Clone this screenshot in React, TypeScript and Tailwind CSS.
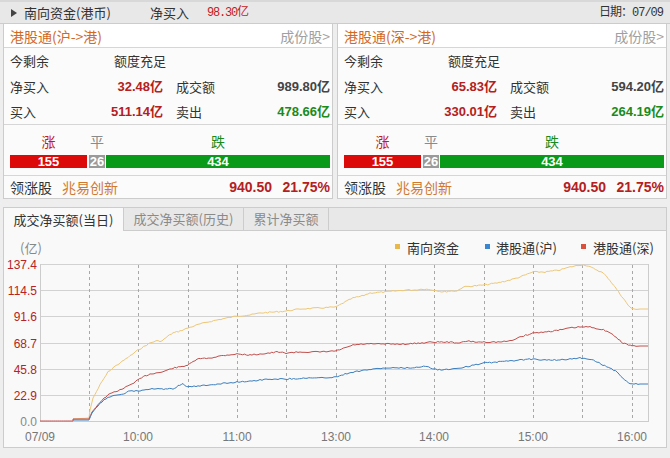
import React from "react";

type P = [number, number];

const yellowPts: P[] = [
  [73, 419], [89, 418], [90, 410], [93, 398], [100, 385], [108, 372], [114, 367], [120, 363], [130, 356], [138, 350], [145, 346], [150, 343], [156, 341], [162, 341], [168, 336], [173, 333], [180, 331], [188, 328], [194, 326], [200, 324], [208, 322], [217, 320], [227, 318], [237, 316], [250, 315], [260, 313], [275, 312], [286, 311], [300, 309], [320, 308], [336, 307], [345, 302], [353, 298], [362, 296], [370, 293], [385, 292], [395, 291], [407, 290], [415, 290], [423, 289], [434, 290], [443, 292], [450, 291], [457, 291], [463, 287], [473, 286], [484, 285], [497, 283], [510, 280], [520, 277], [533, 272], [545, 272], [560, 270], [570, 267], [580, 265], [585, 265], [590, 267], [597, 270], [603, 273], [608, 278], [615, 287], [620, 294], [623, 298], [628, 305], [632, 309], [648, 309],
];
const redPts: P[] = [
  [40, 421], [73, 421], [73, 419], [89, 419], [92, 412], [100, 402], [108, 395], [114, 392], [120, 390], [130, 385], [138, 380], [145, 376], [150, 374], [162, 372], [168, 370], [173, 368], [180, 367], [188, 365], [193, 362], [197, 359], [210, 358], [220, 356], [227, 355], [237, 354], [250, 355], [260, 354], [270, 353], [277, 352], [286, 353], [300, 352], [320, 352], [336, 351], [345, 348], [353, 345], [365, 344], [385, 344], [407, 344], [420, 343], [434, 342], [447, 342], [460, 343], [467, 341], [475, 342], [484, 342], [500, 342], [510, 341], [520, 337], [533, 333], [545, 332], [560, 330], [570, 328], [580, 327], [590, 327], [600, 329], [607, 331], [613, 335], [618, 339], [623, 343], [632, 346], [648, 346],
];
const bluePts: P[] = [
  [73, 420], [89, 420], [92, 413], [100, 403], [108, 397], [114, 396], [120, 395], [125, 393], [130, 391], [138, 391], [150, 389], [160, 389], [173, 389], [178, 386], [183, 384], [188, 387], [200, 386], [210, 385], [217, 384], [227, 383], [237, 382], [250, 381], [260, 380], [270, 379], [286, 379], [307, 378], [320, 378], [336, 377], [345, 374], [353, 372], [365, 370], [375, 369], [385, 368], [407, 368], [420, 367], [427, 366], [434, 369], [443, 370], [450, 369], [460, 368], [470, 366], [484, 363], [497, 362], [510, 361], [520, 360], [533, 359], [545, 360], [560, 360], [570, 359], [580, 358], [590, 359], [597, 362], [603, 365], [610, 368], [617, 372], [623, 378], [630, 384], [648, 384],
];

function densify(pts: P[], seed: number): string {
  let s = seed;
  const rnd = () => {
    s = (s * 9301 + 49297) % 233280;
    return s / 233280;
  };
  const out: string[] = [];
  for (let i = 0; i < pts.length - 1; i++) {
    const [x0, y0] = pts[i];
    const [x1, y1] = pts[i + 1];
    const n = Math.max(1, Math.round((x1 - x0) / 2));
    for (let k = 0; k < n; k++) {
      const t = k / n;
      const x = x0 + (x1 - x0) * t;
      let y = y0 + (y1 - y0) * t;
      if (x > 95 && x < 640) y += (rnd() - 0.5) * 1.2;
      out.push(`${x.toFixed(1)},${y.toFixed(1)}`);
    }
  }
  const last = pts[pts.length - 1];
  out.push(`${last[0]},${last[1]}`);
  return out.join(" ");
}

function Panel({
  title,
  net,
  turnover,
  buy,
  sell,
}: {
  title: string;
  net: string;
  turnover: string;
  buy: string;
  sell: string;
}) {
  const num = "font-['Liberation_Sans','Noto_Sans_CJK_SC',sans-serif] font-bold text-[13px]";
  return (
    <div className="w-[330px] border-l border-r border-b border-[#cccccc] bg-[#fbfbfb]">
      <div className="h-[24px] flex items-center justify-between pl-[6px] pr-[2px] border-b border-[#d6d6d6] bg-white">
        <span className="text-[14px] leading-[24px] text-[#d2691e]">{title}</span>
        <span className="text-[14px] leading-[24px] text-[#a0a0a0]">成份股&gt;</span>
      </div>
      <div className="border-b border-[#d6d6d6] pl-[6px] pr-[2px] text-[13px] text-[#333333]">
        <div className="h-[26px] flex items-center">
          <span className="w-[104px]">今剩余</span>
          <span>额度充足</span>
        </div>
        <div className="h-[25px] flex items-center">
          <span className="w-[60px]">净买入</span>
          <span className={`w-[93px] text-right text-[#b42020] ${num}`}>{net}</span>
          <span className="w-[13px]" />
          <span className="w-[60px]">成交额</span>
          <span className={`flex-1 text-right text-[#444444] ${num}`}>{turnover}</span>
        </div>
        <div className="h-[25px] flex items-center">
          <span className="w-[60px]">买入</span>
          <span className={`w-[93px] text-right text-[#b42020] ${num}`}>{buy}</span>
          <span className="w-[13px]" />
          <span className="w-[60px]">卖出</span>
          <span className={`flex-1 text-right text-[#1a8a1a] ${num}`}>{sell}</span>
        </div>
      </div>
      <div className="h-[51px] border-b border-[#d6d6d6] pl-[6px] pr-[2px] pt-[6px]">
        <div className="flex h-[20px] items-center text-[14px]">
          <span className="w-[77px] text-center text-[#c41a1a]">涨</span>
          <span className="w-[2px]" />
          <span className="w-[16px] text-center text-[#8a8a8a]">平</span>
          <span className="w-[1px]" />
          <span className="flex-1 text-center text-[#1a8a1a]">跌</span>
        </div>
        <div className="mt-[4px] flex h-[13px] text-white font-['Liberation_Sans',sans-serif] font-bold text-[13px] leading-[13px]">
          <span className="w-[77px] bg-[#dd0a0a] text-center">155</span>
          <span className="w-[2px]" />
          <span className="w-[16px] bg-[#9a9a9a] text-center">26</span>
          <span className="w-[1px]" />
          <span className="flex-1 bg-[#089a18] text-center">434</span>
        </div>
      </div>
      <div className="h-[22px] flex items-center pl-[6px] pr-[2px] text-[14px]">
        <span className="w-[52px] text-[#333333]">领涨股</span>
        <span className="text-[#d07a30]">兆易创新</span>
        <span className={`flex-1 text-right text-[#b42020] ${num} text-[14px]`}>940.50</span>
        <span className={`w-[58px] text-right text-[#b42020] ${num} text-[14px]`}>21.75%</span>
      </div>
    </div>
  );
}

export default function App() {
  const dashX = [89, 138, 188, 237, 286, 336, 385, 434, 484, 533, 582, 632];
  const gridY = [264, 290, 316, 343, 369, 395];
  const yLabels = ["137.4", "114.5", "91.6", "68.7", "45.8", "22.9"];
  const times: [string, number][] = [
    ["10:00", 138],
    ["11:00", 237],
    ["13:00", 336],
    ["14:00", 434],
    ["15:00", 533],
    ["16:00", 632],
  ];
  return (
    <div className="w-[670px] h-[458px] overflow-hidden bg-[#eeeeee] font-['Noto_Sans_CJK_SC',sans-serif]">
      <div className="h-[24px] bg-[#e8e8e8] border-t-[2px] border-[#d8d8d8] border-b border-b-[#cccccc] flex items-center text-[13px] text-[#333333]">
        <svg width="6" height="8" viewBox="0 0 6 8" className="ml-[11px]">
          <polygon points="0,0 6,4 0,8" fill="#444444" />
        </svg>
        <span className="ml-[7px] w-[126px]">南向资金(港币)</span>
        <span className="w-[57px]">净买入</span>
        <span className="text-[#c41a1a] font-['Liberation_Mono','Noto_Sans_CJK_SC',monospace] text-[12px] tracking-[-1.2px]">98.30亿</span>
        <span className="ml-auto mr-[7px] font-['Liberation_Mono','Noto_Sans_CJK_SC',monospace] text-[12px] tracking-[-1px]">日期：07/09</span>
      </div>
      <div className="flex gap-[4px] px-[3px]">
        <Panel title="港股通(沪->港)" net="32.48亿" turnover="989.80亿" buy="511.14亿" sell="478.66亿" />
        <Panel title="港股通(深->港)" net="65.83亿" turnover="594.20亿" buy="330.01亿" sell="264.19亿" />
      </div>
      <div className="mx-[3px] mt-[8px] w-[664px] h-[24px] flex bg-[#e8e8e8] border-t border-l border-r border-[#cccccc] text-[13px]">
        <div className="w-[120px] h-[23px] bg-[#f9f9f9] border-r border-[#cccccc] flex items-center justify-center text-[#333333]">
          成交净买额(当日)
        </div>
        <div className="w-[120px] h-[23px] border-r border-b border-[#cccccc] flex items-center justify-center text-[#8a8a8a]">
          成交净买额(历史)
        </div>
        <div className="w-[85px] h-[23px] border-r border-b border-[#cccccc] flex items-center justify-center text-[#8a8a8a]">
          累计净买额
        </div>
        <div className="flex-1 h-[23px] border-b border-[#cccccc]" />
      </div>
      <div className="mx-[3px] w-[664px] h-[217px] bg-[#f9f9f9] border-l border-r border-b border-[#cccccc]">
        <svg width="662" height="216" viewBox="4 231 662 216" className="block font-['Liberation_Sans','Noto_Sans_CJK_SC',sans-serif]">
          <text x="20" y="253" fontSize="13" fill="#888888" fontFamily="'Noto Sans CJK SC', sans-serif">(亿)</text>
          <rect x="395" y="244" width="5" height="5" fill="#e8b84a" />
          <text x="407" y="252.5" fontSize="13" fill="#333333" fontFamily="'Noto Sans CJK SC', sans-serif">南向资金</text>
          <rect x="485" y="244" width="5" height="5" fill="#3a86d0" />
          <text x="496" y="252.5" fontSize="13" fill="#333333" fontFamily="'Noto Sans CJK SC', sans-serif">港股通(沪)</text>
          <rect x="581" y="244" width="5" height="5" fill="#d9503c" />
          <text x="593" y="252.5" fontSize="13" fill="#333333" fontFamily="'Noto Sans CJK SC', sans-serif">港股通(深)</text>

          {gridY.map((y) => (
            <line key={y} x1="40" x2="648" y1={y + 0.5} y2={y + 0.5} stroke="#d2d2d2" strokeWidth="1" />
          ))}
          {dashX.map((x) => (
            <line key={x} x1={x + 0.5} x2={x + 0.5} y1="265" y2="421" stroke="#a8a8a8" strokeWidth="1" strokeDasharray="3,3" />
          ))}
          <line x1="40.5" x2="40.5" y1="264" y2="422" stroke="#cccccc" />
          <line x1="648.5" x2="648.5" y1="264" y2="422" stroke="#cccccc" />
          <line x1="40" x2="649" y1="421.5" y2="421.5" stroke="#cccccc" />

          {yLabels.map((l, i) => (
            <text key={l} x="37" y={gridY[i] + 4.5} fontSize="12" fill="#b82222" textAnchor="end">
              {l}
            </text>
          ))}
          <text x="37" y="425.5" fontSize="12" fill="#888888" textAnchor="end">0.0</text>
          <text x="40" y="441" fontSize="12" fill="#777777" textAnchor="middle">07/09</text>
          {times.map(([t, x]) => (
            <text key={t} x={x} y="441" fontSize="12" fill="#777777" textAnchor="middle">
              {t}
            </text>
          ))}

          <polyline points={densify(yellowPts, 7)} fill="none" stroke="#edc778" strokeWidth="1" />
          <polyline points={densify(redPts, 13)} fill="none" stroke="#c0504d" strokeWidth="1" />
          <polyline points={densify(bluePts, 29)} fill="none" stroke="#3d7fbd" strokeWidth="1" />
        </svg>
      </div>
    </div>
  );
}
